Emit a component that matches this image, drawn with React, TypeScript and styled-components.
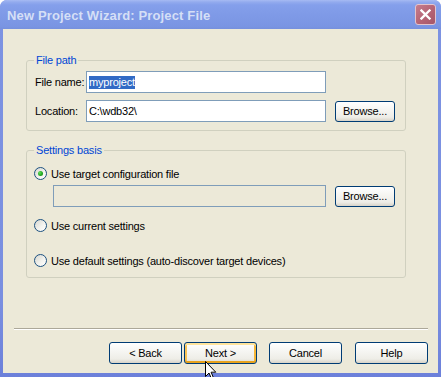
import React from 'react';
import styled, {createGlobalStyle, css} from 'styled-components';

const GlobalStyle = createGlobalStyle`
	html, body {
		margin: 0;
		padding: 0;
		background: #fff;
	}

	body {
		font-family: "Liberation Sans", Arial, sans-serif;
		font-size: 11px;
		letter-spacing: -0.2px;
		color: #000;
	}
`;

const Window = styled.div`
	position: relative;
	width: 441px;
	height: 377px;
	display: flex;
	flex-direction: column;
	border-radius: 7px 7px 0 0;
	overflow: hidden;
	background: linear-gradient(to bottom, #7d93e2 0%, #7a8fe0 80%, #6c80da 100%);
`;

const TitleBar = styled.div`
	flex: none;
	height: 29px;
	box-sizing: border-box;
	display: flex;
	align-items: center;
	padding: 2px 5px 0 7px;
	background: linear-gradient(to bottom, #a6baf3 0px, #93abee 2px, #849feb 5px, #7f9ae7 50%, #7a95e3 90%, #7690dd 100%);
`;

const Title = styled.span`
	font: bold 13px "Liberation Sans", Arial, sans-serif;
	color: #d5dff6;
	letter-spacing: 0.15px;
`;

const CloseButton = styled.div`
	margin-left: auto;
	width: 21px;
	height: 21px;
	box-sizing: border-box;
	border: 1px solid #e3c4cc;
	border-radius: 3px;
	background: linear-gradient(135deg, #c57d8e 0%, #b56374 55%, #a55769 100%);
	display: flex;
	align-items: center;
	justify-content: center;
	margin-top: -2px;
`;

const Client = styled.div`
	flex: 1;
	margin: 0 3px 4px 3px;
	background: #ece9d8;
	display: flex;
	flex-direction: column;
`;

const Page = styled.div`
	flex: 1;
	padding: 25px 32px 0 23px;
	display: flex;
	flex-direction: column;
`;

const Group = styled.fieldset<{$bottom?: number}>`
	margin: 0;
	min-width: 0;
	border: 1px solid #d0d0bf;
	border-radius: 3px;
	padding: 4px 9px ${p => p.$bottom ?? 8}px 7px;

	& + & {
		margin-top: 13px;
	}
`;

const Caption = styled.legend`
	padding: 0 2px;
	margin-left: 0;
	line-height: 13px;
	color: #0046d5;
`;

const Row = styled.div<{$gap?: number}>`
	display: flex;
	align-items: center;
	height: 22px;
	margin-top: ${p => p.$gap ?? 0}px;
`;

const Label = styled.span`
	width: 51px;
	padding-left: 1px;
	flex: none;
	white-space: nowrap;
`;

const TextBox = styled.div<{$width: number; $disabled?: boolean; $indent?: number}>`
	box-sizing: border-box;
	width: ${p => p.$width}px;
	height: 22px;
	margin-left: ${p => p.$indent ?? 0}px;
	border: 1px solid #7f9db9;
	background: ${p => (p.$disabled ? '#ece9d8' : '#fff')};
	padding: 0 2px;
	display: flex;
	align-items: center;
	white-space: nowrap;
	line-height: 13px;
`;

const Selected = styled.span`
	background: #316ac5;
	color: #fff;
`;

const Button = styled.button<{$width?: number; $hot?: boolean; $height?: number}>`
	box-sizing: border-box;
	width: ${p => p.$width ?? 73}px;
	height: ${p => p.$height ?? 22}px;
	flex: none;
	padding: 0;
	border: 1px solid #003c74;
	border-radius: 3px;
	background: linear-gradient(to bottom, #ffffff 0%, #f7f7f4 35%, #eeede7 80%, #d8d3c8 100%);
	font: 11px "Liberation Sans", Arial, sans-serif;
	letter-spacing: -0.2px;
	color: #000;

	${p =>
		p.$hot &&
		css`
			box-shadow: inset 0 2px 0 #ffe49c, inset 0 -2px 0 #e7a21c, inset 2px 0 0 #f9c457, inset -2px 0 0 #f6b739;
		`}
`;

const BrowseButton = styled(Button)`
	margin-left: 9px;
`;

const RadioRow = styled.label<{$gap?: number}>`
	display: flex;
	align-items: center;
	height: 15px;
	white-space: nowrap;
	margin-top: ${p => p.$gap ?? 0}px;
`;

const RadioCircle = styled.span<{$checked?: boolean}>`
	box-sizing: border-box;
	width: 13px;
	height: 13px;
	flex: none;
	border-radius: 50%;
	border: 1px solid #1c5180;
	background: linear-gradient(135deg, #d6d6cf 0%, #f4f4f0 60%, #ffffff 100%);
	display: flex;
	align-items: center;
	justify-content: center;
	margin-right: 4px;

	&::after {
		content: '';
		display: ${p => (p.$checked ? 'block' : 'none')};
		width: 5px;
		height: 5px;
		border-radius: 50%;
		background: radial-gradient(circle at 35% 35%, #5fe05a 0%, #22a722 55%, #13801a 100%);
	}
`;

const Footer = styled.div`
	flex: none;
	display: flex;
	flex-direction: column;
`;

const Separator = styled.div`
	margin: 0 10px 0 11px;
	border-top: 1px solid #aca899;
	border-bottom: 1px solid #ffffff;
`;

const ButtonRow = styled.div`
	display: flex;
	justify-content: flex-end;
	padding: 12px 10px 9px 0;
`;

const Spaced = styled.span<{$right: number}>`
	display: flex;
	margin-right: ${p => p.$right}px;
`;

const Cursor = styled.svg`
	position: absolute;
	left: 205px;
	top: 361px;
	z-index: 5;
`;

const Radio = ({checked, label, gap}: {checked?: boolean; label: string; gap?: number}): JSX.Element => (
	<RadioRow $gap={gap}>
		<RadioCircle $checked={checked}/>
		{label}
	</RadioRow>
);

const App = (): JSX.Element => (
	<>
		<GlobalStyle/>
		<Window>
			<TitleBar>
				<Title>New Project Wizard: Project File</Title>
				<CloseButton>
					<svg width="11" height="11" viewBox="0 0 11 11">
						<path d="M1.5 1.5 L9.5 9.5 M9.5 1.5 L1.5 9.5" stroke="#fff" strokeWidth="2.3" strokeLinecap="square"/>
					</svg>
				</CloseButton>
			</TitleBar>
			<Client>
				<Page>
					<Group>
						<Caption>File path</Caption>
						<Row>
							<Label>File name:</Label>
							<TextBox $width={240}><Selected>myproject</Selected></TextBox>
						</Row>
						<Row $gap={7}>
							<Label>Location:</Label>
							<TextBox $width={240}>C:\wdb32\</TextBox>
							<BrowseButton $width={60} $height={21}>Browse...</BrowseButton>
						</Row>
					</Group>
					<Group $bottom={9}>
						<Caption>Settings basis</Caption>
						<Radio checked gap={5} label="Use target configuration file"/>
						<Row $gap={4}>
							<TextBox $width={273} $indent={19} $disabled/>
							<BrowseButton $width={60} $height={21}>Browse...</BrowseButton>
						</Row>
						<Radio gap={11} label="Use current settings"/>
						<Radio gap={20} label="Use default settings (auto-discover target devices)"/>
					</Group>
				</Page>
				<Footer>
					<Separator/>
					<ButtonRow>
						<Spaced $right={2}><Button>&lt; Back</Button></Spaced>
						<Spaced $right={12}><Button $hot>Next &gt;</Button></Spaced>
						<Spaced $right={13}><Button>Cancel</Button></Spaced>
						<Button>Help</Button>
					</ButtonRow>
				</Footer>
			</Client>
			<Cursor width="12" height="19" viewBox="0 0 12 19">
				<path d="M0.5 0.5 L0.5 15.5 L4 12 L6.6 18 L8.6 17.1 L6.1 11.2 L10.8 11.2 Z" fill="#fff" stroke="#000" strokeWidth="1"/>
			</Cursor>
		</Window>
	</>
);

export default App;
